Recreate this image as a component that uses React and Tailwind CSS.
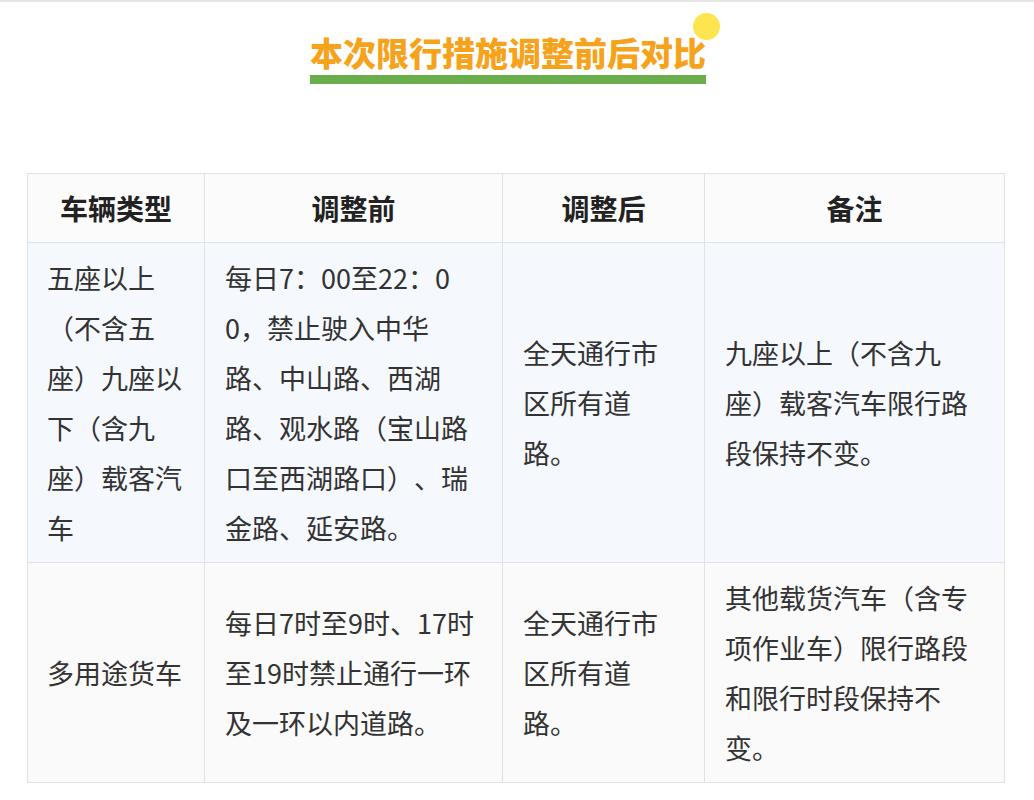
import React from 'react';

const rows = [
  {
    type: '五座以上（不含五座）九座以下（含九座）载客汽车',
    before: '每日7：00至22：00，禁止驶入中华路、中山路、西湖路、观水路（宝山路口至西湖路口）、瑞金路、延安路。',
    after: '全天通行市区所有道路。',
    note: '九座以上（不含九座）载客汽车限行路段保持不变。',
    bg: 'bg-[#f5f8fd]',
  },
  {
    type: '多用途货车',
    before: '每日7时至9时、17时至19时禁止通行一环及一环以内道路。',
    after: '全天通行市区所有道路。',
    note: '其他载货汽车（含专项作业车）限行路段和限行时段保持不变。',
    bg: 'bg-[#fafafa]',
  },
];

const headers = ['车辆类型', '调整前', '调整后', '备注'];

export default function App() {
  const font = { fontFamily: '"Noto Sans CJK SC", "Noto Sans", sans-serif' };

  return (
    <div className="min-h-[800px] w-[1034px] bg-white border-t-2 border-[#e6e6e6] [text-spacing-trim:space-all]" style={font}>
      {/* Title */}
      <div className="flex justify-center pr-[18px] pt-[28px]">
        <div className="relative">
          <span className="absolute -right-[14px] -top-[17px] w-[27px] h-[27px] rounded-full bg-[#fde54f]" />
          <h1 className="relative text-[33px] leading-[44px] font-black text-[#f7a21b]">
            本次限行措施调整前后对比
          </h1>
          <div className="mt-[1px] h-[9px] bg-[#6aae4b]" />
        </div>
      </div>

      {/* Table */}
      <table className="mt-[89px] ml-[27px] w-[977px] table-fixed border-collapse text-[#333333] break-all">
        <colgroup>
          <col className="w-[177px]" />
          <col className="w-[298px]" />
          <col className="w-[202px]" />
          <col className="w-[300px]" />
        </colgroup>
        <thead>
          <tr className="h-[69px] bg-[#fbfbfb]">
            {headers.map((h) => (
              <th key={h} className="border border-[#dfe2e6] text-[28px] font-bold text-[#222222] text-center">
                {h}
              </th>
            ))}
          </tr>
        </thead>
        <tbody>
          {rows.map((r, i) => (
            <tr key={i} className={r.bg}>
              <td className="border border-[#dfe2e6] pl-[19px] pr-[20px] pt-[10px] pb-[9px] text-[27px] leading-[50px] align-middle">
                {r.type}
              </td>
              <td className="border border-[#dfe2e6] pl-[20px] pr-[20px] pt-[10px] pb-[9px] text-[27px] leading-[50px] align-middle">
                {r.before}
              </td>
              <td className="border border-[#dfe2e6] pl-[20px] pr-[22px] pt-[10px] pb-[9px] text-[27px] leading-[50px] align-middle">
                {r.after}
              </td>
              <td className="border border-[#dfe2e6] pl-[20px] pr-[20px] pt-[10px] pb-[9px] text-[27px] leading-[50px] align-middle">
                {r.note}
              </td>
            </tr>
          ))}
        </tbody>
      </table>
    </div>
  );
}
